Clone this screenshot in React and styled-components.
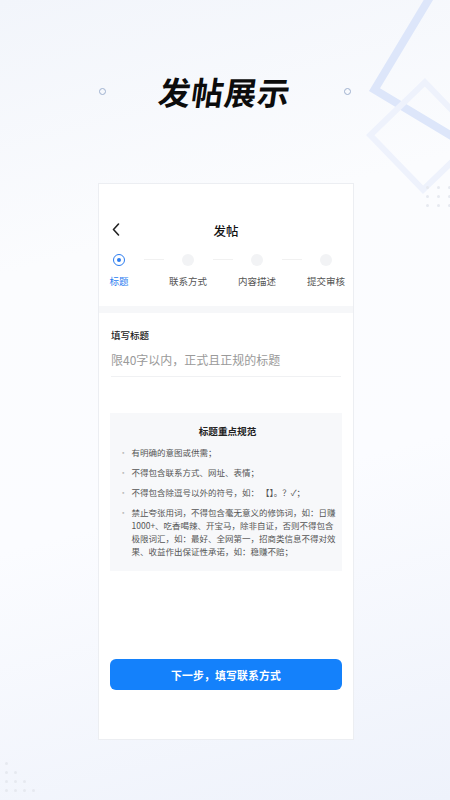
import React from 'react';
import styled, { createGlobalStyle } from 'styled-components';

const Global = createGlobalStyle`
  html, body { margin: 0; padding: 0; }
  body {
    font-family: "Noto Sans CJK SC", "Noto Sans", sans-serif;
    color: #222;
  }
`;

const steps = ['标题', '联系方式', '内容描述', '提交审核'];

const rules = [
  '有明确的意图或供需；',
  '不得包含联系方式、网址、表情；',
  '不得包含除逗号以外的符号，如： 【】。？✓；',
  '禁止夸张用词，不得包含毫无意义的修饰词，如：日赚1000+、吃香喝辣、开宝马，除非自证，否则不得包含极限词汇，如：最好、全网第一，招商类信息不得对效果、收益作出保证性承诺，如：稳赚不赔；',
];

function App() {
  return (
    <Page>
      <Global />
      <DecoSquare $left={369} $top={91} $size={140} $w={8} $rot={-59} $c="#dde6fa" />
      <DecoSquare $left={366} $top={135} $size={82} $w={6} $rot={-44} $c="#eef2fc" />
      <Dots $right={0} $top={186}>
        {Array.from({ length: 9 }).map((_, i) => <Dot key={i} />)}
      </Dots>
      <CornerDots>
        {[1, 2, 3, 4].map((n) => (
          <DotRow key={n}>
            {Array.from({ length: n }).map((_, i) => <Dot key={i} />)}
          </DotRow>
        ))}
      </CornerDots>

      <Header>
        <Ring />
        <Title>发帖展示</Title>
        <Ring />
      </Header>

      <Card>
        <NavBar>
          <Back>
            <svg width="8" height="13" viewBox="0 0 8 13">
              <path d="M6.5 1 L1.5 6.5 L6.5 12" fill="none" stroke="#222" strokeWidth="1.6" strokeLinecap="round" strokeLinejoin="round" />
            </svg>
          </Back>
          <NavTitle>发帖</NavTitle>
        </NavBar>

        <Steps>
          {steps.map((s, i) => (
            <React.Fragment key={s}>
              {i > 0 && <Connector><span /></Connector>}
              <Step>
                <Circle $active={i === 0} />
                <StepLabel $active={i === 0}>{s}</StepLabel>
              </Step>
            </React.Fragment>
          ))}
        </Steps>

        <Band />

        <Form>
          <FieldLabel>填写标题</FieldLabel>
          <Placeholder>限40字以内，正式且正规的标题</Placeholder>
          <Underline />
        </Form>

        <RuleBox>
          <RuleTitle>标题重点规范</RuleTitle>
          {rules.map((r) => (
            <RuleItem key={r}>
              <Bullet>·</Bullet>
              <span>{r}</span>
            </RuleItem>
          ))}
        </RuleBox>

        <NextButton>下一步，填写联系方式</NextButton>
      </Card>
    </Page>
  );
}

const Page = styled.div`
  position: relative;
  width: 450px;
  height: 800px;
  overflow: hidden;
  background: linear-gradient(165deg, #f2f5fb 0%, #fbfcfe 30%, #fbfcff 60%, #eef2fb 100%);
`;

const DecoSquare = styled.div`
  position: absolute;
  left: ${({ $left }) => $left}px;
  top: ${({ $top }) => $top}px;
  width: ${({ $size }) => $size}px;
  height: ${({ $size }) => $size}px;
  border: ${({ $w }) => $w}px solid ${({ $c }) => $c};
  transform-origin: 0 0;
  transform: rotate(${({ $rot }) => $rot}deg);
  box-sizing: border-box;
`;

const Dots = styled.div`
  position: absolute;
  right: ${({ $right }) => $right}px;
  top: ${({ $top }) => $top}px;
  width: 24px;
  display: grid;
  grid-template-columns: repeat(3, 3px);
  gap: 6px 8px;
  padding-left: 1px;
`;

const Dot = styled.i`
  display: block;
  width: 3px;
  height: 3px;
  border-radius: 50%;
  background: #e6e9f0;
`;

const CornerDots = styled.div`
  position: absolute;
  left: 5px;
  top: 762px;
  display: flex;
  flex-direction: column;
  gap: 6px;
`;

const DotRow = styled.div`
  display: flex;
  gap: 6px;
`;

const Header = styled.div`
  height: 183px;
  display: flex;
  align-items: flex-start;
  justify-content: center;
  gap: 53px;
  padding-top: 70px;
  box-sizing: border-box;
  position: relative;
`;

const Ring = styled.span`
  width: 5px;
  height: 5px;
  margin-top: 18px;
  border-radius: 50%;
  border: 1.3px solid #9fb1cf;
`;

const Title = styled.h1`
  margin: 0;
  font-size: 32px;
  line-height: 42px;
  font-weight: 700;
  letter-spacing: 1px;
  color: #0c0c0c;
  transform: skewX(-8deg);
`;

const Card = styled.div`
  position: relative;
  margin-left: 98px;
  width: 256px;
  height: 557px;
  box-sizing: border-box;
  background: #fff;
  border: 1px solid #eceef2;
  padding-top: 30px;
  display: flex;
  flex-direction: column;
`;

const NavBar = styled.div`
  position: relative;
  height: 32px;
  display: flex;
  align-items: center;
  justify-content: center;
`;

const Back = styled.span`
  position: absolute;
  left: 13px;
  top: 9px;
  display: flex;
`;

const NavTitle = styled.div`
  font-size: 12.5px;
  font-weight: 500;
  color: #111;
`;

const Steps = styled.div`
  display: flex;
  padding-top: 8px;
  height: 60px;
  box-sizing: border-box;
`;

const Step = styled.div`
  width: 40px;
  display: flex;
  flex-direction: column;
  align-items: center;
`;

const Circle = styled.span`
  width: 12px;
  height: 12px;
  border-radius: 50%;
  box-sizing: border-box;
  background: ${({ $active }) => ($active ? '#fff' : '#f2f3f5')};
  border: ${({ $active }) => ($active ? '1.2px solid #2b7cf0' : 'none')};
  display: flex;
  align-items: center;
  justify-content: center;
  &::after {
    content: '';
    display: ${({ $active }) => ($active ? 'block' : 'none')};
    width: 4px;
    height: 4px;
    border-radius: 50%;
    background: #2b7cf0;
  }
`;

const StepLabel = styled.span`
  margin-top: 8px;
  font-size: 9.5px;
  line-height: 14px;
  white-space: nowrap;
  color: ${({ $active }) => ($active ? '#2b7cf0' : '#555')};
`;

const Connector = styled.div`
  width: 29px;
  display: flex;
  justify-content: center;
  padding-top: 5px;
  span {
    width: 20px;
    height: 0;
    border-top: 1.5px solid #f1f1f1;
  }
`;

const Band = styled.div`
  height: 7px;
  background: #f6f7f9;
`;

const Form = styled.div`
  padding: 15px 12px 0;
`;

const FieldLabel = styled.div`
  font-size: 9.5px;
  line-height: 14px;
  font-weight: 500;
  color: #222;
`;

const Placeholder = styled.div`
  margin-top: 9px;
  font-size: 12px;
  line-height: 18px;
  color: #9a9a9a;
`;

const Underline = styled.div`
  margin-top: 7px;
  height: 1px;
  background: #f0f1f3;
`;

const RuleBox = styled.div`
  margin: 36px 11px 0 11px;
  height: 158px;
  box-sizing: border-box;
  background: #f7f8fa;
  padding: 11px 6px 0 9px;
`;

const RuleTitle = styled.div`
  text-align: center;
  font-size: 9.6px;
  line-height: 14px;
  font-weight: 600;
  color: #222;
  margin-bottom: 8px;
`;

const RuleItem = styled.div`
  display: flex;
  gap: 4px;
  font-size: 8.5px;
  line-height: 13px;
  color: #555;
  margin-bottom: 7px;
`;

const Bullet = styled.span`
  color: #bbb;
  flex: none;
`;

const NextButton = styled.button`
  margin: 88px 11px 0 11px;
  height: 31px;
  border: none;
  border-radius: 6px;
  background: #1481fb;
  color: #fff;
  font-family: inherit;
  font-size: 10.8px;
  font-weight: 700;
  letter-spacing: 0.2px;
`;

export default App;
